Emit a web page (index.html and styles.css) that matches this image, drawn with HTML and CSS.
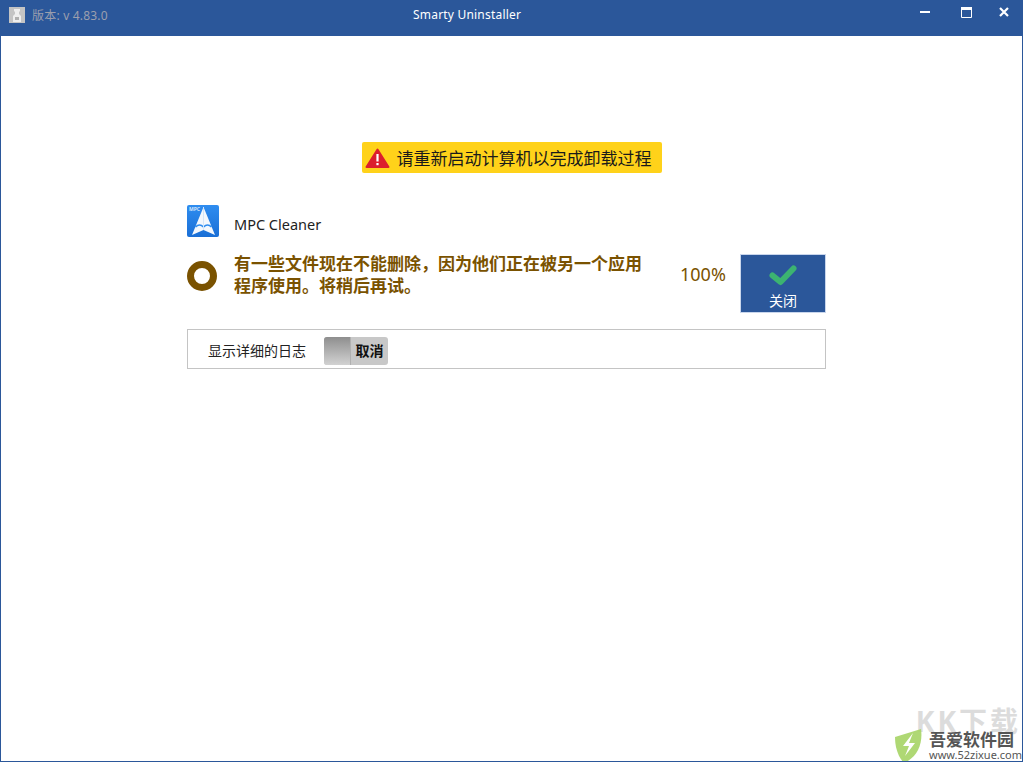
FILE: index.html
```html
<!DOCTYPE html>
<html lang="zh-CN">
<head>
  <meta charset="UTF-8" />
  <title>Smarty Uninstaller</title>
  <link rel="stylesheet" href="styles.css">
</head>
<body>
  <div class="window">
    <div class="titlebar">
      <div class="version">
        <svg class="app-icon" width="16" height="16" viewBox="0 0 16 16">
          <rect width="16" height="16" fill="#c4c4c4"/>
          <path d="M5 2h6v2l-1 1v2l2 2v6H4V9l2-2V5L5 4z" fill="#eeeeee"/>
          <path d="M6 10h4v3H6z" fill="#b0b0b0"/>
        </svg>
        <span>版本: v 4.83.0</span>
      </div>
      <div class="title">Smarty Uninstaller</div>
      <div class="controls">
        <svg class="ctl-min" width="10" height="2" viewBox="0 0 10 2"><rect width="10" height="2" fill="#fff"/></svg>
        <svg class="ctl-max" width="11" height="11" viewBox="0 0 11 11"><path d="M.5 .5h10v10H.5z" fill="none" stroke="#fff"/><rect width="11" height="3" fill="#fff"/></svg>
        <svg class="ctl-close" width="10" height="10" viewBox="0 0 10 10"><path d="M1 1l8 8M9 1l-8 8" stroke="#fff" stroke-width="2.2"/></svg>
      </div>
    </div>

    <div class="content">
      <div class="alert">
        <svg width="25" height="20" viewBox="0 0 25 20">
          <path d="M12.5 1.5L23.5 19H1.5z" fill="#dc1e2d" stroke="#dc1e2d" stroke-width="2" stroke-linejoin="round"/>
          <rect x="11.4" y="6" width="2.2" height="7.5" fill="#fff"/>
          <rect x="11.4" y="15" width="2.2" height="2.2" fill="#fff"/>
        </svg>
        <span>请重新启动计算机以完成卸载过程</span>
      </div>

      <div class="panel">
        <div class="app-row">
          <svg class="mpc-logo" width="32" height="32" viewBox="0 0 32 32">
            <defs>
              <linearGradient id="mpc" x1="0" y1="0" x2="0" y2="1">
                <stop offset="0" stop-color="#2f8df0"/>
                <stop offset="1" stop-color="#1a6fd6"/>
              </linearGradient>
            </defs>
            <rect width="32" height="32" rx="2" fill="url(#mpc)"/>
            <path d="M16.5 2L28 30L16.5 25L5 30z" fill="#f4f8fd"/>
            <path d="M8.5 22q4-4 8 0q4-4 8 0" fill="none" stroke="#2f8df0" stroke-width="1.6"/>
            <path d="M16.5 2V25" stroke="#d5e6f8" stroke-width="1"/>
            <text class="mpc-tag" x="2" y="6">MPC</text>
          </svg>
          <span class="app-name">MPC Cleaner</span>
        </div>

        <div class="status-row">
          <div class="ring"></div>
          <div class="status-text">有一些文件现在不能删除，因为他们正在被另一个应用程序使用。将稍后再试。</div>
          <div class="percent">100%</div>
          <button class="close-btn">
            <svg width="28" height="22" viewBox="0 0 28 22"><path d="M3.5 11.5L11.5 18L24.5 4.5" fill="none" stroke="#3cb371" stroke-width="6" stroke-linecap="round" stroke-linejoin="round"/></svg>
            <span>关闭</span>
          </button>
        </div>

        <div class="log-box">
          <span class="log-label">显示详细的日志</span>
          <div class="toggle">
            <div class="toggle-knob"></div>
            <div class="toggle-text">取消</div>
          </div>
        </div>
      </div>
    </div>

    <div class="watermark">
      <div class="wm-kk">KK下载</div>
      <svg class="wm-shield" width="30" height="34" viewBox="0 0 30 34"><path d="M1 8L27 0C29 14 24 28 10 34C4 28 1 18 1 8z" fill="#a6d465" opacity=".9"/><path d="M19 4L9 17h6l-4 10 10-13h-6z" fill="#fff"/></svg>
      <div class="wm-name">吾爱软件园</div>
      <div class="wm-url">www.52zixue.com</div>
    </div>
  </div>
</body>
</html>
```

FILE: styles.css
```css
* {
  box-sizing: border-box;
}
html, body {
  margin: 0;
  height: 100%;
}
body {
  font-family: "Noto Sans", "Noto Sans CJK SC", sans-serif;
  background: #fff;
  overflow: hidden;
}
.window {
  position: relative;
  width: 1023px;
  height: 762px;
  border: 1px solid #2b579a;
  border-top: none;
  overflow: hidden;
}
.titlebar {
  display: flex;
  align-items: flex-start;
  height: 36px;
  margin: 0 -1px;
  background: #2b579a;
  color: #fff;
}
.version {
  display: flex;
  align-items: center;
  flex: none;
  gap: 7px;
  width: 413px;
  height: 30px;
  padding-left: 9px;
  font-size: 12px;
  letter-spacing: .2px;
  color: #9b9fae;
}
.app-icon {
  flex: none;
}
.title {
  font-size: 12px;
  line-height: 29px;
  letter-spacing: .2px;
}
.controls {
  display: flex;
  align-items: center;
  height: 24px;
  margin-left: auto;
  padding-right: 14px;
}
.ctl-min {
  margin-right: 31px;
}
.ctl-max {
  margin-right: 27px;
}
.content {
  display: flex;
  flex-direction: column;
  align-items: center;
  padding-top: 106px;
}
.alert {
  display: flex;
  align-items: center;
  gap: 7px;
  width: 300px;
  height: 31px;
  padding-left: 3px;
  background: #ffd21a;
  border-radius: 2px;
  font-size: 17px;
  color: #1a1a1a;
  white-space: nowrap;
}
.panel {
  align-self: flex-start;
  width: 639px;
  margin-top: 32px;
  margin-left: 186px;
}
.app-row {
  display: flex;
  align-items: center;
  gap: 15px;
  height: 32px;
}
.mpc-logo {
  flex: none;
}
.mpc-tag {
  font-size: 5px;
  font-weight: 700;
  fill: #cfe4fa;
}
.app-name {
  padding-top: 5px;
  font-size: 14.5px;
  color: #222;
}
.status-row {
  display: flex;
  align-items: flex-start;
  margin-top: 17px;
}
.ring {
  flex: none;
  width: 30px;
  height: 30px;
  margin-top: 7px;
  border: 7px solid #7a5200;
  border-radius: 50%;
}
.status-text {
  width: 416px;
  margin-top: -1px;
  margin-left: 17px;
  font-size: 17px;
  line-height: 22px;
  font-weight: 700;
  color: #7a5200;
}
.percent {
  margin-top: 7px;
  margin-left: 30px;
  font-size: 18px;
  line-height: 26px;
  color: #7a5200;
}
.close-btn {
  flex: none;
  display: flex;
  flex-direction: column;
  align-items: center;
  width: 86px;
  height: 59px;
  margin-left: auto;
  padding: 9px 0 0;
  background: #2b579a;
  border: 1px solid #c9d6ec;
  color: #fff;
  font-family: inherit;
  font-size: 14px;
  line-height: 18px;
}
.close-btn span {
  margin-top: 6px;
}
.log-box {
  display: flex;
  align-items: center;
  gap: 18px;
  height: 40px;
  margin-top: 16px;
  padding-top: 3px;
  padding-left: 20px;
  border: 1px solid #c4c4c4;
}
.log-label {
  margin-bottom: 2px;
  font-size: 14px;
  color: #222;
}
.toggle {
  display: flex;
  width: 64px;
  height: 28px;
  background: #c8c8c8;
  border-radius: 3px;
  overflow: hidden;
}
.toggle-knob {
  width: 27px;
  background: linear-gradient(#8e8e8e, #d2d2d2);
  border-right: 1px solid #b0b0b0;
}
.toggle-text {
  flex: 1;
  text-align: center;
  font-size: 14px;
  font-weight: 700;
  line-height: 28px;
  color: #111;
}
.watermark {
  position: absolute;
  right: 0;
  bottom: 0;
  width: 128px;
  height: 50px;
}
.wm-kk {
  position: absolute;
  top: 0;
  right: 1px;
  font-size: 28px;
  line-height: 20px;
  letter-spacing: 3px;
  font-weight: 700;
  color: #dcdcdc;
  white-space: nowrap;
}
.wm-shield {
  position: absolute;
  left: 0;
  bottom: -2px;
}
.wm-name {
  position: absolute;
  top: 20px;
  left: 35px;
  font-size: 17px;
  line-height: 18px;
  font-weight: 700;
  color: #555;
  white-space: nowrap;
}
.wm-url {
  position: absolute;
  top: 38px;
  left: 35px;
  font-size: 11px;
  line-height: 12px;
  color: #555;
  white-space: nowrap;
}
```
